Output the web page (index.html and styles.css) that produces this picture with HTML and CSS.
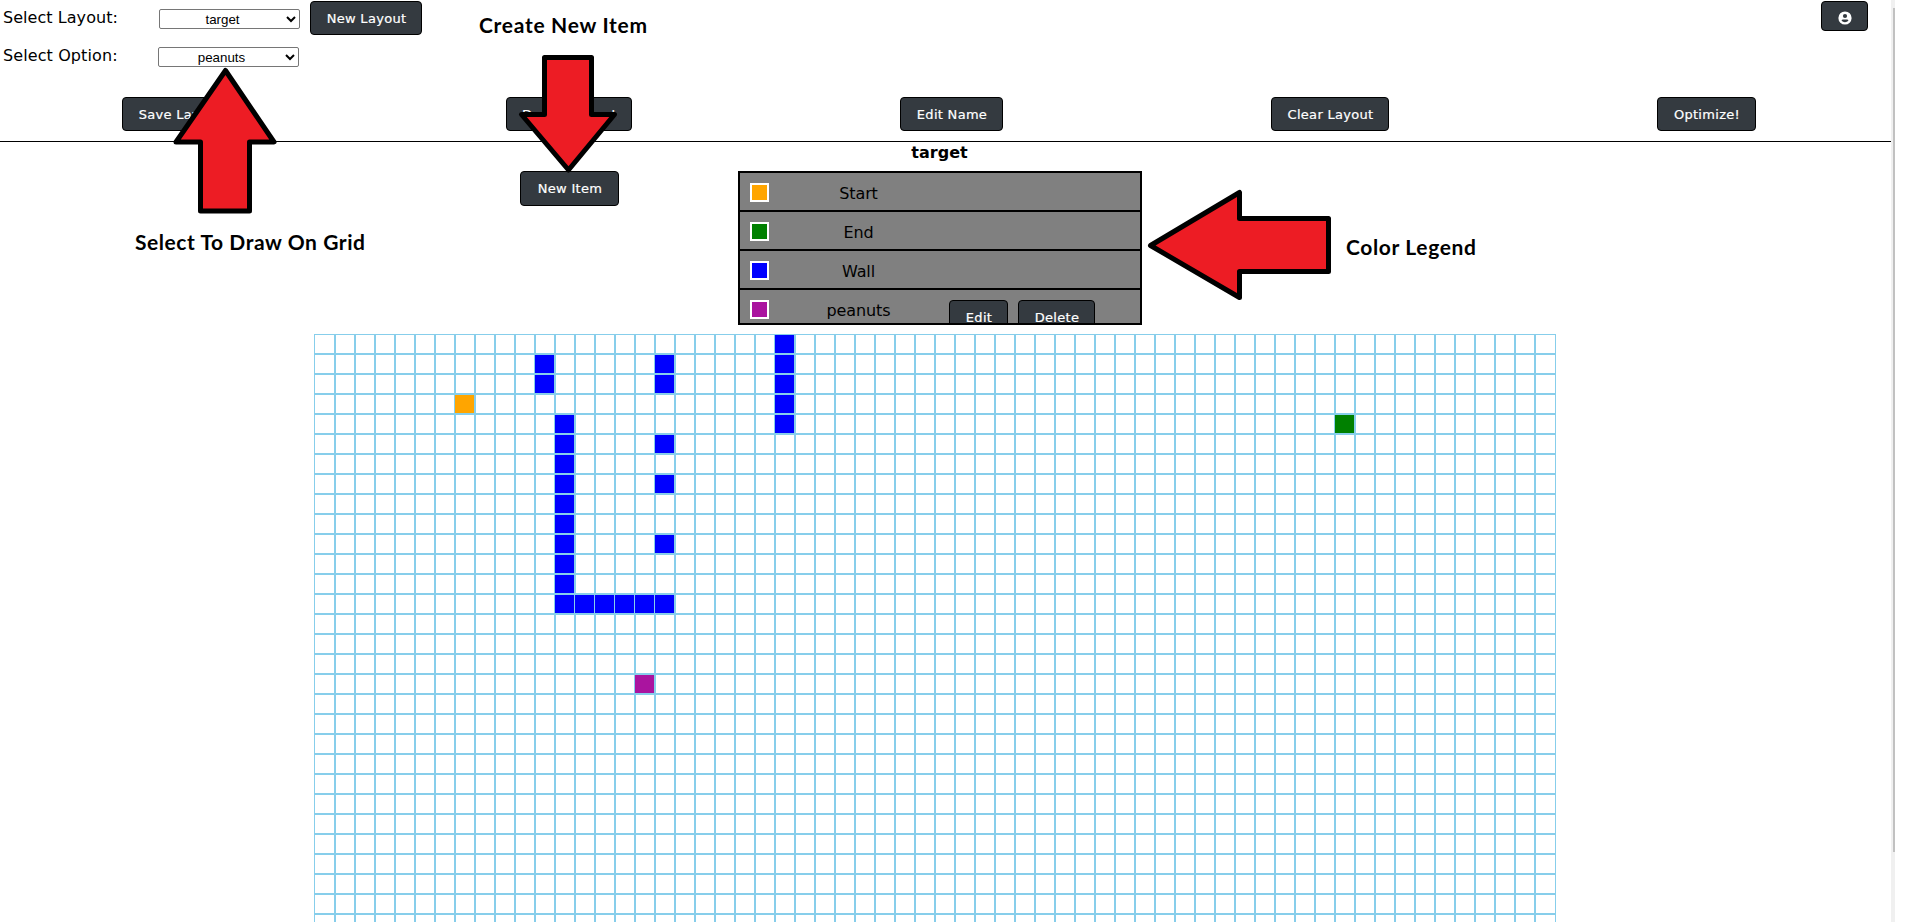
FILE: index.html
```
<!DOCTYPE html>
<html lang="en">
<head>
<meta charset="utf-8">
<title>Layout Editor</title>
<link rel="stylesheet" href="styles.css">
</head>
<body>
<div class="page">
  <header class="header">
    <div class="controls">
      <div class="control-row">
        <label class="label" for="layout">Select Layout:</label>
        <select class="select" id="layout"><option>target</option></select>
        <button class="btn btn-new-layout">New Layout</button>
      </div>
      <div class="control-row control-row-option">
        <label class="label label-option" for="option">Select Option:</label>
        <select class="select" id="option"><option>peanuts</option></select>
      </div>
    </div>
    <button class="btn btn-user" aria-label="Account">
      <svg class="user-icon" viewBox="0 0 14 14"><circle cx="7" cy="7" r="6.6" fill="#fff"/><circle cx="7" cy="5" r="2.1" fill="#343a40"/><path d="M3.6 9.6C3.6 8.4 5 8.6 7 8.6s3.4-.2 3.4 1C9.6 10.8 8.400 11.300 7 11.300S4.400 10.800 3.600 9.600z" fill="#343a40"/></svg>
    </button>
  </header>
  <nav class="toolbar">
    <button class="btn btn-save">Save Layout</button>
    <button class="btn btn-delete-layout">Delete Layout</button>
    <button class="btn btn-edit-name">Edit Name</button>
    <button class="btn btn-clear">Clear Layout</button>
    <button class="btn btn-optimize">Optimize!</button>
  </nav>
  <h1 class="title">target</h1>
  <div class="items">
    <button class="btn btn-new-item">New Item</button>
    <div class="legend">
      <div class="legend-row"><span class="swatch start"></span><span class="legend-name">Start</span></div>
      <div class="legend-row"><span class="swatch end"></span><span class="legend-name">End</span></div>
      <div class="legend-row"><span class="swatch wall"></span><span class="legend-name">Wall</span></div>
      <div class="legend-row"><span class="swatch peanuts"></span><span class="legend-name">peanuts</span><button class="btn btn-edit">Edit</button><button class="btn btn-delete">Delete</button></div>
    </div>
  </div>
  <div class="grid" id="grid"></div>
</div>
<div class="scrollbar"><div class="thumb"></div></div>
<svg class="callouts" viewBox="0 0 1920 922">
  <path class="arrow-backing" d="M533 103H611V112H617V124H515V114H533Z"/>
  <g class="arrow">
    <path d="M225.500 70.500L274 142H249.500V211H200.500V142H176Z"/>
    <path d="M544.500 57.500H591.500V114.500H614.500L568.500 170L521.500 114.500H544.500Z"/>
    <path d="M1150.500 245.500L1239.500 192.500V218.500H1328.500V271.500H1239.500V297.500Z"/>
  </g>
  <g class="callout-text">
    <text x="479" y="33" textLength="168">Create New Item</text>
    <text x="135" y="250" textLength="230">Select To Draw On Grid</text>
    <text x="1346" y="255" textLength="130">Color Legend</text>
  </g>
</svg>
<script src="grid.js"></script>
</body>
</html>
```
FILE: styles.css
```
* { box-sizing: border-box; }
body { margin: 0; height: 922px; overflow: hidden; background: #fff; color: #000; font: 16px/20px "DejaVu Sans", sans-serif; }
.page { width: 1891px; height: 922px; overflow: hidden; }
.header { display: flex; justify-content: space-between; height: 97px; padding: 1px 23px 0 3px; }
.control-row { display: flex; height: 34px; }
.control-row-option { padding-top: 12px; }
.label { width: 156px; padding-top: 7px; letter-spacing: 0.05px; }
.label-option { width: 155px; margin-top: -1px; letter-spacing: 0.1px; }
.control-row-option .label { padding-top: 0; }
.select { width: 141px; height: 20px; margin-top: 8px; padding: 0 2px 0 0; border: 1px solid #767676; border-radius: 2px; background: #fff; color: #000; font: 13.333px "Liberation Sans", sans-serif; text-align: center; text-align-last: center; }
.control-row-option .select { margin-top: 0; }
.btn { flex: none; height: 34px; padding: 1px 0 0 1px; border: 1px solid #000; border-radius: 4px; background: #343a40; color: #fff; font: 13px/20px "DejaVu Sans", sans-serif; letter-spacing: 0.3px; -webkit-text-stroke: 0.2px #fff; white-space: nowrap; }
.btn-new-layout { width: 112px; margin-left: 10px; }
.btn-user { width: 47px; height: 30px; display: flex; align-items: center; justify-content: center; padding: 4px 0 0; }
.user-icon { width: 14px; height: 14px; }
.toolbar { display: flex; gap: 268px; height: 45px; padding-left: 122px; border-bottom: 1px solid #000; }
.btn-save { width: 116px; }
.btn-delete-layout { width: 126px; }
.btn-edit-name { width: 103px; }
.btn-clear { width: 118px; }
.btn-optimize { width: 99px; }
.title { height: 29px; margin: 0; padding: 1px 12px 0 0; font-size: 16px; line-height: 20px; text-align: center; }
.items { display: flex; align-items: flex-start; gap: 119px; height: 163px; padding-left: 520px; }
.btn-new-item { width: 99px; height: 35px; padding-top: 0; }
.legend { width: 404px; height: 154px; border: 2px solid #000; background: #808080; overflow: hidden; }
.legend-row { display: flex; height: 39px; padding: 10px 0 0 10px; border-bottom: 2px solid #000; }
.swatch { width: 19px; height: 19px; border: 2px solid #fff; }
.start { background: #ffa500; }
.end { background: #008000; }
.wall { background: #0000ff; }
.peanuts { background: #aa149f; }
.legend-name { width: 180px; padding: 1px 1px 0 0; text-align: center; letter-spacing: -0.1px; }
.btn-edit { width: 59px; }
.btn-delete { width: 77px; margin-left: 10px; }
.grid { display: grid; grid-template-columns: repeat(62, 20px); grid-auto-rows: 20px; width: 1242px; margin-left: 314px; border: solid #87ceeb; border-width: 0 1px; }
.cell { border: 1px solid #87ceeb; }
.cell.first, .cell.filled { border-left: 0; }
.cell.last { border-right: 0; }
.scrollbar { position: absolute; top: 0; left: 1891px; width: 4px; height: 922px; padding: 8px 0 0 2px; background: #f0f0f0; }
.thumb { height: 844px; background: #c1c1c1; }
.callouts { position: absolute; top: 0; left: 0; width: 1920px; height: 922px; pointer-events: none; }
.arrow-backing { fill: #343a40; }
.arrow { fill: #ed1c24; stroke: #000; stroke-width: 5; stroke-linejoin: round; }
.callout-text { font: bold 21px Lato, sans-serif; }
```
FILE: grid.js
```
const COLUMNS = 62, ROWS = 30;
const filled = { '3,7': 'start', '4,51': 'end', '17,16': 'peanuts' };
const walls = [[1, 11], [2, 11], [1, 17], [2, 17], [5, 17], [7, 17], [10, 17]];
for (let r = 0; r < 5; r++) walls.push([r, 23]);
for (let r = 4; r < 14; r++) walls.push([r, 12]);
for (let c = 13; c < 18; c++) walls.push([13, c]);
walls.forEach(([r, c]) => { filled[r + ',' + c] = 'wall'; });

const grid = document.getElementById('grid');
for (let r = 0; r < ROWS; r++) {
  for (let c = 0; c < COLUMNS; c++) {
    const cell = document.createElement('div');
    const kind = filled[r + ',' + c];
    cell.className = 'cell' + (kind ? ' filled ' + kind : '') + (c === 0 ? ' first' : '') + (c === COLUMNS - 1 ? ' last' : '');
    grid.appendChild(cell);
  }
}
```
